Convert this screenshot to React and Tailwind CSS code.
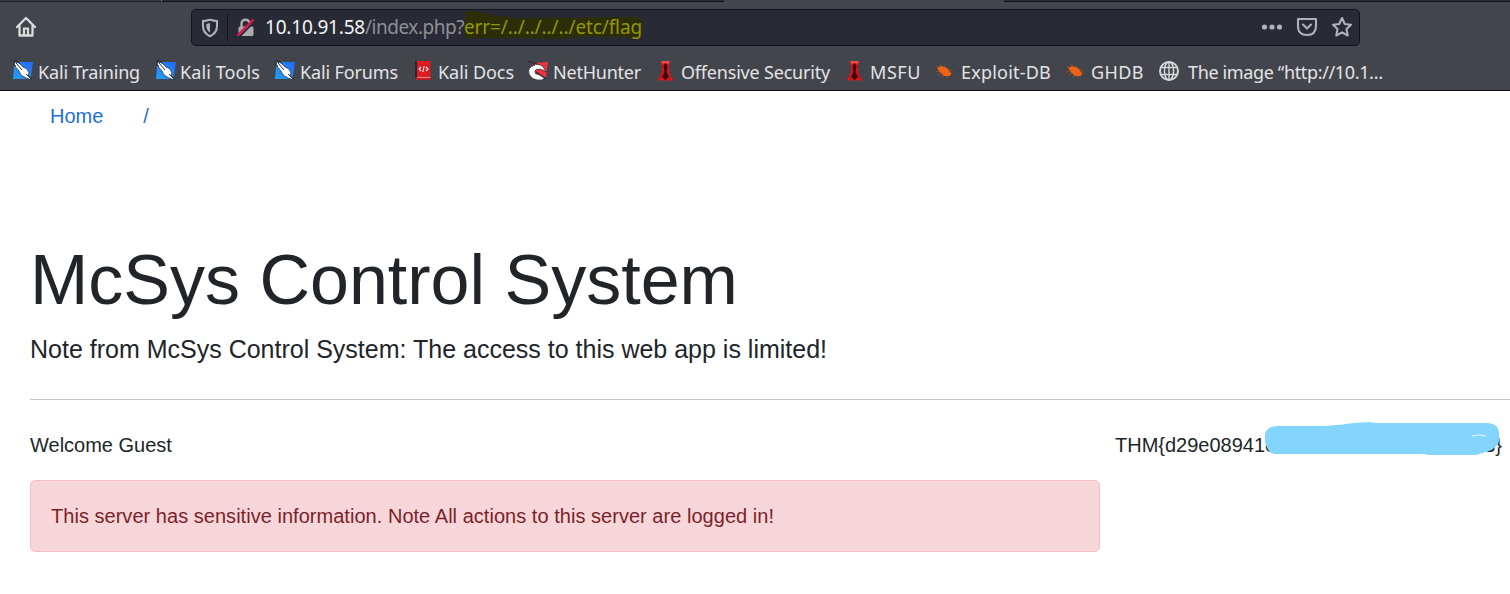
const KaliIcon = () => (
  <svg width="22" height="22" viewBox="0 0 22 22">
    <defs>
      <linearGradient id="kali" x1="1" y1="0" x2="0" y2="1">
        <stop offset="0" stopColor="#2468f5" />
        <stop offset="1" stopColor="#21a2f8" />
      </linearGradient>
    </defs>
    <path d="M5 2H21L18.5 19H1L2 7Z" fill="url(#kali)" />
    <path d="M3 2L7 3L11 7L15 9L17 13L16 16L20 20L14 18L9 15L7 11L2 5Z" fill="#fff" stroke="#20283a" strokeWidth=".7" />
    <path d="M1 1L5 1L8 4M1 4L4 6M4 3L10 10M14 14L20 19" stroke="#20283a" strokeWidth="1" fill="none" />
  </svg>
);

const DocsIcon = () => (
  <svg width="17" height="22" viewBox="0 0 17 22">
    <path d="M0 1H3V20H0Z" fill="#28263d" />
    <path d="M2 1H15.5V17H2Z" fill="#df1c1d" />
    <path d="M0.5 18L2 17H15.5V20H.5Z" fill="#c51b20" />
    <path d="M2.5 17.4H15.5" stroke="#efb1b0" strokeWidth=".8" />
    <path d="M6 7L4 9L6 11M11 7L13 9L11 11M9.2 6L7.8 12" stroke="#fff" fill="none" strokeWidth="1.1" />
  </svg>
);

const NetHunterIcon = () => (
  <svg width="22" height="22" viewBox="0 0 22 22">
    <path d="M5 3L20 2L18 17L10 19L2 12Z" fill="#ed343e" />
    <path d="M5 4Q14 4 16 8L18 12L15 10Q8 8 7 11Q7 15 10 14L17 18L14 20Q4 21 1 14Q-1 7 7 5Z" fill="#fff" stroke="#272b32" strokeWidth=".8" />
    <path d="M0 1L9 4M8 12L18 19" stroke="#272b32" strokeWidth="1.2" />
  </svg>
);

const OffsecIcon = () => (
  <svg width="18" height="22" viewBox="0 0 18 22">
    <path d="M4.5 1H12.5L12 12L16.5 20.5H.5L5 12Z" fill="#d4161b" />
    <path d="M4.5 1H12.5V3.5H4.5Z" fill="#ed4a48" />
    <path d="M8.5 3L10.5 6L9.5 12L11.5 16L9 20H8L5.5 16L7.5 12L6.5 6Z" fill="#3b080b" />
    <path d="M4.5 17H12.5" stroke="#3b080b" strokeWidth="1" />
  </svg>
);

const ExploitIcon = () => (
  <svg width="20" height="22" viewBox="0 0 20 22">
    <path d="M1 6L6 9M5 4L8 9M0 12L5 11M9 5L11 9M7 18L9 13M12 18L12 13M13 9L18 11M3 15L7 12M14 13L18 14" stroke="#ad561f" strokeWidth="1" opacity=".7" />
    <path d="M2 8L6 6L12 8L16 13L15 16L9 16L5 12Z" fill="#ed6213" />
  </svg>
);

const GlobeIcon = () => (
  <svg width="22" height="22" viewBox="0 0 22 22" fill="none" stroke="#d7d7d9">
    <circle cx="11" cy="11" r="9" strokeWidth="2" />
    <ellipse cx="11" cy="11" rx="4.6" ry="9" strokeWidth="1.5" />
    <path d="M11 2V20M3 7.5H19M3 14.5H19" strokeWidth="1.4" />
  </svg>
);

const bookmarks = [
  { text: "Kali Training", Icon: KaliIcon, slot: "w-[143px]", icon: "w-[26px]", length: 102 },
  { text: "Kali Tools", Icon: KaliIcon, slot: "w-[119px]", icon: "w-[25px]", length: 80 },
  { text: "Kali Forums", Icon: KaliIcon, slot: "w-[141px]", icon: "w-[26px]", length: 98 },
  { text: "Kali Docs", Icon: DocsIcon, slot: "w-[113px]", icon: "w-[23px]", length: 76 },
  { text: "NetHunter", Icon: NetHunterIcon, slot: "w-[129px]", icon: "w-[25px]", length: 88 },
  { text: "Offensive Security", Icon: OffsecIcon, slot: "w-[189px]", icon: "w-[24px]", length: 149 },
  { text: "MSFU", Icon: OffsecIcon, slot: "w-[89px]", icon: "w-[24px]", length: 51 },
  { text: "Exploit-DB", Icon: ExploitIcon, slot: "w-[131px]", icon: "w-[26px]", length: 90 },
  { text: "GHDB", Icon: ExploitIcon, slot: "w-[92px]", icon: "w-[25px]", length: 53 },
  { text: "The image “http://10.1…", Icon: GlobeIcon, slot: "w-[240px]", icon: "w-[30px]", length: 195 },
];

// Spreads the letters so that a label takes the given width.
function Fit({ text, width, className = "" }) {
  const fit = (el) => {
    if (!el) return;
    el.style.letterSpacing = "0px";
    const natural = el.getBoundingClientRect().width;
    el.style.letterSpacing = (width - natural) / text.length + "px";
  };
  return <span ref={fit} className={"inline-block whitespace-pre " + className}>{text}</span>;
}

export default function App() {
  return (
    <div className="flex h-[594px] w-full flex-col overflow-hidden bg-white font-['Liberation_Sans',sans-serif] text-[20px] text-[#212529]">
      <header className="flex h-[91px] shrink-0 flex-col border-b border-[#0c0c13] bg-[#43454c] font-['Noto_Sans',sans-serif]">
        <div className="flex h-[2px] shrink-0">
          <div className="w-[161px] border-b border-[#181a24] bg-[#3a3c44]" />
          <div className="w-[563px] border-b border-l border-b-[#11131d] border-l-[#777980] bg-[#292b35]" />
          <div className="w-[280px]" />
          <div className="flex-1 border-b border-[#11131d] bg-[#292b35]" />
        </div>
        <div className="flex h-[51px] items-center pl-[15px]">
          <svg className="mb-[2px] mr-[154px] shrink-0" width="22" height="22" viewBox="0 0 22 22" fill="none" stroke="#dcdcdd" strokeWidth="2.3" strokeLinejoin="round" strokeLinecap="round">
            <path d="M2 11L11 2L20 11M4.5 10V19.5H17.5V10" />
            <path d="M9 19V12.5H13V19" strokeWidth="2.2" strokeLinejoin="miter" />
          </svg>
          <div className="flex h-[37px] w-[1169px] items-center rounded-[5px] border border-[#11131b] bg-[#282a35] pl-[8px] text-[19px]">
            <svg className="shrink-0" width="20" height="20" viewBox="0 0 20 20" fill="none" stroke="#b0b1b6" strokeWidth="2.1">
              <path d="M10 1.8Q14 3 17 3V8Q17 15 10 18.2Q3 15 3 8V3Q6 3 10 1.8Z" />
              <path d="M10 5V14.5Q6.3 12 6.3 8V6Z" fill="#b0b1b6" stroke="none" />
            </svg>
            <div className="ml-[7px] h-[27px] w-px bg-[#12131b]" />
            <svg className="ml-[8px] mr-[9px] shrink-0" width="20" height="20" viewBox="0 0 20 20">
              <path d="M5.5 9V6Q5.5 1.8 9.5 1.8T13.5 6V9" fill="none" stroke="#aaaab0" strokeWidth="2.4" />
              <rect x="2.5" y="8.5" width="15" height="9.5" rx="1.5" fill="#aaaab0" />
              <path d="M3 19L19 3" stroke="#282a35" strokeWidth="2" />
              <path d="M1.5 17.5L17.5 1.5" stroke="#e31747" strokeWidth="2.4" />
            </svg>
            <Fit text="10.10.91.58" width={100} className="text-[#f4f4f5]" />
            <Fit text="/index.php?" width={99} className="text-[#8e9096]" />
            <span className="relative">
              <svg className="absolute -left-[4px] -top-[4px]" width="184" height="36" viewBox="0 0 184 36">
                <path d="M5 5Q5 2 9 2L20 3Q45 9 65 9L175 8Q182 8 182 14V22Q182 28 174 28L120 28Q90 31 60 29L7 29Q3 28 5 22Z" fill="#2d2e08" />
              </svg>
              <Fit text="err=/../../../../etc/flag" width={178} className="relative text-[#939607]" />
            </span>
            <div className="ml-auto flex items-center pb-px pr-[6px]">
              <svg width="22" height="22" viewBox="0 0 22 22" fill="#b1b2b7">
                <circle cx="3.5" cy="11" r="2.6" /><circle cx="11" cy="11" r="2.6" /><circle cx="18.5" cy="11" r="2.6" />
              </svg>
              <svg className="ml-[13px]" width="22" height="22" viewBox="0 0 22 22" fill="none" stroke="#b1b2b7" strokeWidth="2.1" strokeLinejoin="round" strokeLinecap="round">
                <path d="M2 3H20V10Q20 19 11 19Q2 19 2 10Z" /><path d="M7 8.5L11 12.5L15 8.5" />
              </svg>
              <svg className="ml-[13px]" width="22" height="22" viewBox="0 0 22 22" fill="none" stroke="#b1b2b7" strokeWidth="2.1" strokeLinejoin="round">
                <path d="M11 2L13.8 8L20 8.7L15.5 13L16.7 19.5L11 16.4L5.3 19.5L6.5 13L2 8.7L8.2 8Z" />
              </svg>
            </div>
          </div>
        </div>
        <nav className="flex h-[37px] items-center pl-[12px] pt-[2px] text-[18px] text-[#e4e4e6]">
          {bookmarks.map(({ text, Icon, slot, icon, length }) => (
            <a key={text} className={"flex shrink-0 items-center " + slot}>
              <span className={"shrink-0 pb-[3px] " + icon}><Icon /></span>
              <Fit text={text} width={length} />
            </a>
          ))}
        </nav>
      </header>
      <main className="flex flex-col pl-[30px]">
        <nav className="flex h-[50px] gap-[40px] pl-[20px] leading-[50px] text-[#1d6fdc]">
          <a>Home</a>
          <a>/</a>
        </nav>
        <h1 className="mt-[97px] text-[70px] leading-[84px]">McSys Control System</h1>
        <p className="mt-[8px] text-[25px] leading-[38px]">Note from McSys Control System: The access to this web app is limited!</p>
        <hr className="mt-[31px] border-t border-[#c4c5c6]" />
        <div className="flex pt-[30px] leading-[30px]">
          <section className="w-[1070px] shrink-0">
            <p>Welcome Guest</p>
            <div className="mt-[20px] flex h-[72px] items-center rounded-[5px] border border-[#f1bfc5] bg-[#f7d6d9] pl-[20px] text-[#7d1f2a]">
              <Fit text="This server has sensitive information. Note All actions to this server are logged in!" width={723} />
            </div>
          </section>
          <p className="relative ml-[15px] flex w-[387px] justify-between">
            <span>THM&#123;d29e08941c</span>
            <span>3&#125;</span>
            <svg className="absolute left-[149px] -top-[9px]" width="237" height="36" viewBox="0 0 237 36">
              <path d="M1 13Q3 5 14 5L61 5Q77 4 90 2L105 1L111 2H224Q235 3 235 12V20Q234 27 222 31L212 34H169Q162 34 160 33L11 33Q6 32 5 30Q1 24 1 19Z" fill="#83d5fe" />
              <path d="M208 15Q216 13 222 15" fill="none" stroke="#e8f8ff" strokeWidth="1" />
            </svg>
          </p>
        </div>
      </main>
    </div>
  );
}
